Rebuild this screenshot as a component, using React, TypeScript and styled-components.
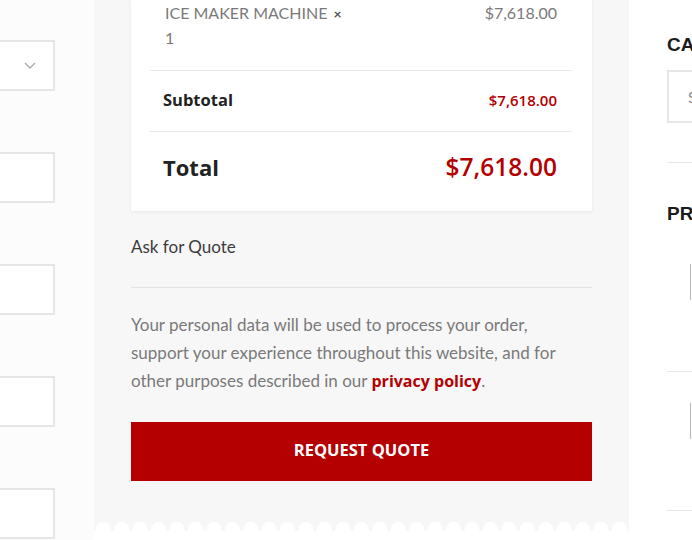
import React from "react";
import styled, { createGlobalStyle } from "styled-components";

const RED = "#b50000";
const STROKE = "#e6e6e6";
const BODY_FONT = `"Lato", "Liberation Sans", sans-serif`;
const HEAD_FONT = `"Open Sans", "Noto Sans", sans-serif`;

const GlobalStyle = createGlobalStyle`
  html, body {
    margin: 0;
    padding: 0;
    background: #ffffff;
  }
  body {
    font-family: ${BODY_FONT};
    -webkit-font-smoothing: antialiased;
  }
`;

const Page = styled.div`
  display: flex;
  align-items: flex-start;
  width: 692px;
  height: 540px;
  overflow: hidden;
  background: #ffffff;
`;

/* left billing form column, mostly out of view */
const FormColumn = styled.div`
  flex: none;
  width: 94px;
  padding-top: 40px;
  display: flex;
  flex-direction: column;
  gap: 61px;
  background: #fcfcfc;
  align-self: stretch;
`;

const Field = styled.div`
  box-sizing: border-box;
  width: 65px;
  height: 51px;
  margin-left: -10px;
  border: 2px solid ${STROKE};
  background: #ffffff;
  display: flex;
  align-items: center;
  justify-content: flex-end;
  padding-right: 17px;
`;

const Chevron = () => (
  <svg width="12" height="7" viewBox="0 0 12 7" fill="none">
    <path d="M1 1l5 5 5-5" stroke="#a9a9a9" strokeWidth="1.3" />
  </svg>
);

/* order review panel */
const ReviewPanel = styled.div`
  flex: none;
  width: 535px;
  display: flex;
  flex-direction: column;
`;

const PanelBody = styled.div`
  background: #f7f7f7;
  padding: 0 37px 40px;
`;

const Scallop = styled.div`
  height: 10px;
  background-color: #f7f7f7;
  background-image: radial-gradient(circle at 50% 8px, #ffffff 7px, transparent 7.6px);
  background-size: 18.45px 10px;
  background-position: 0 0;
`;

const Card = styled.div`
  background: #ffffff;
  padding: 0 20px 0 19px;
  box-shadow: 0 1px 3px rgba(0, 0, 0, 0.07);
`;

const Row = styled.div<{ $pad: string; $height?: number }>`
  display: flex;
  justify-content: space-between;
  align-items: center;
  padding: ${(p) => p.$pad};
  height: ${(p) => (p.$height ? `${p.$height}px` : "auto")};
  border-bottom: 1px solid #e8e8e8;
  &:last-child {
    border-bottom: none;
  }
`;

const ItemName = styled.div`
  width: 200px;
  font-family: ${BODY_FONT};
  font-size: 16px;
  line-height: 24px;
  color: #7a7a7a;
  text-transform: uppercase;
`;

const Times = styled.span`
  font-weight: 700;
  color: #555;
  font-size: 14px;
  margin-left: 6px;
`;

const ItemPrice = styled.div`
  align-self: flex-start;
  font-family: ${BODY_FONT};
  font-size: 16px;
  line-height: 24px;
  color: #7a7a7a;
`;

const RowLabel = styled.div<{ $size: number }>`
  font-family: ${HEAD_FONT};
  font-weight: 700;
  font-size: ${(p) => p.$size}px;
  color: #222;
`;

const RowAmount = styled.div<{ $size: number }>`
  font-family: ${HEAD_FONT};
  font-weight: 600;
  font-size: ${(p) => p.$size}px;
  color: #b30000;
`;

const AskTitle = styled.div`
  margin-top: 24px;
  padding-bottom: 28px;
  border-bottom: 1px solid #e2e2e2;
  font-family: ${BODY_FONT};
  font-size: 17px;
  line-height: 24px;
  color: #3c3c3c;
`;

const Privacy = styled.p`
  margin: 23px 0 0;
  font-family: ${BODY_FONT};
  font-size: 17px;
  line-height: 28px;
  color: #7a7a7a;
`;

const PolicyLink = styled.a`
  font-family: ${HEAD_FONT};
  font-size: 16px;
  font-weight: 700;
  color: #b30000;
  text-decoration: none;
`;

const SubmitButton = styled.button`
  display: block;
  width: 100%;
  height: 59px;
  margin-top: 27px;
  padding: 0 0 5px;
  border: none;
  background: ${RED};
  color: #ffffff;
  font-family: ${HEAD_FONT};
  font-weight: 700;
  font-size: 16.5px;
  text-transform: uppercase;
  cursor: pointer;
`;

/* right sidebar, cut off at the edge */
const Sidebar = styled.div`
  flex: none;
  width: 220px;
  margin-left: 38px;
`;

const Widget = styled.div<{ $pad: string; $last?: boolean }>`
  padding: ${(p) => p.$pad};
  border-bottom: ${(p) => (p.$last ? "none" : "1px solid #e8e8e8")};
`;

const WidgetTitle = styled.h4<{ $gap?: number }>`
  margin: 0 0 ${(p) => p.$gap ?? 0}px;
  font-family: "Liberation Sans", Arial, sans-serif;
  font-size: 19px;
  line-height: 22px;
  font-weight: 700;
  color: #1c1c1c;
  text-transform: uppercase;
  white-space: nowrap;
`;

const SearchBox = styled.div`
  box-sizing: border-box;
  height: 53px;
  margin-top: 14px;
  border: 2px solid ${STROKE};
  padding-left: 19px;
  display: flex;
  align-items: center;
  font-family: ${BODY_FONT};
  font-size: 15px;
  color: #888;
`;

const ProductItem = styled.div`
  padding: 31px 0 71px 23px;
  border-bottom: 1px solid #e8e8e8;
`;

const Thumb = styled.div`
  width: 60px;
  height: 36px;
  border-left: 1px solid #b9b9b9;
`;

export default function App() {
  return (
    <>
      <GlobalStyle />
      <Page>
        <FormColumn>
          <Field>
            <Chevron />
          </Field>
          <Field />
          <Field />
          <Field />
          <Field />
        </FormColumn>

        <ReviewPanel>
          <PanelBody>
            <Card>
              <Row $pad="1px 15px 20px 15px">
                <ItemName>
                  Ice Maker Machine<Times>×</Times>
                  <br />1
                </ItemName>
                <ItemPrice>$7,618.00</ItemPrice>
              </Row>
              <Row $pad="0 15px 3px 13px" $height={57}>
                <RowLabel $size={16.5}>Subtotal</RowLabel>
                <RowAmount $size={15}>$7,618.00</RowAmount>
              </Row>
              <Row $pad="18px 15px 28px 13px">
                <RowLabel $size={22}>Total</RowLabel>
                <RowAmount $size={24.5}>$7,618.00</RowAmount>
              </Row>
            </Card>

            <AskTitle>Ask for Quote</AskTitle>

            <Privacy>
              Your personal data will be used to process your order,
              <br />
              support your experience throughout this website, and for
              <br />
              other purposes described in our{" "}
              <PolicyLink href="#">privacy policy</PolicyLink>.
            </Privacy>

            <SubmitButton type="button">Request Quote</SubmitButton>
          </PanelBody>
          <Scallop />
        </ReviewPanel>

        <Sidebar>
          <Widget $pad="34px 0 39px">
            <WidgetTitle>Categories</WidgetTitle>
            <SearchBox>Search…</SearchBox>
          </Widget>
          <Widget $pad="40px 0 0" $last>
            <WidgetTitle $gap={8}>Products</WidgetTitle>
            <ProductItem>
              <Thumb />
            </ProductItem>
            <ProductItem>
              <Thumb />
            </ProductItem>
          </Widget>
        </Sidebar>
      </Page>
    </>
  );
}
